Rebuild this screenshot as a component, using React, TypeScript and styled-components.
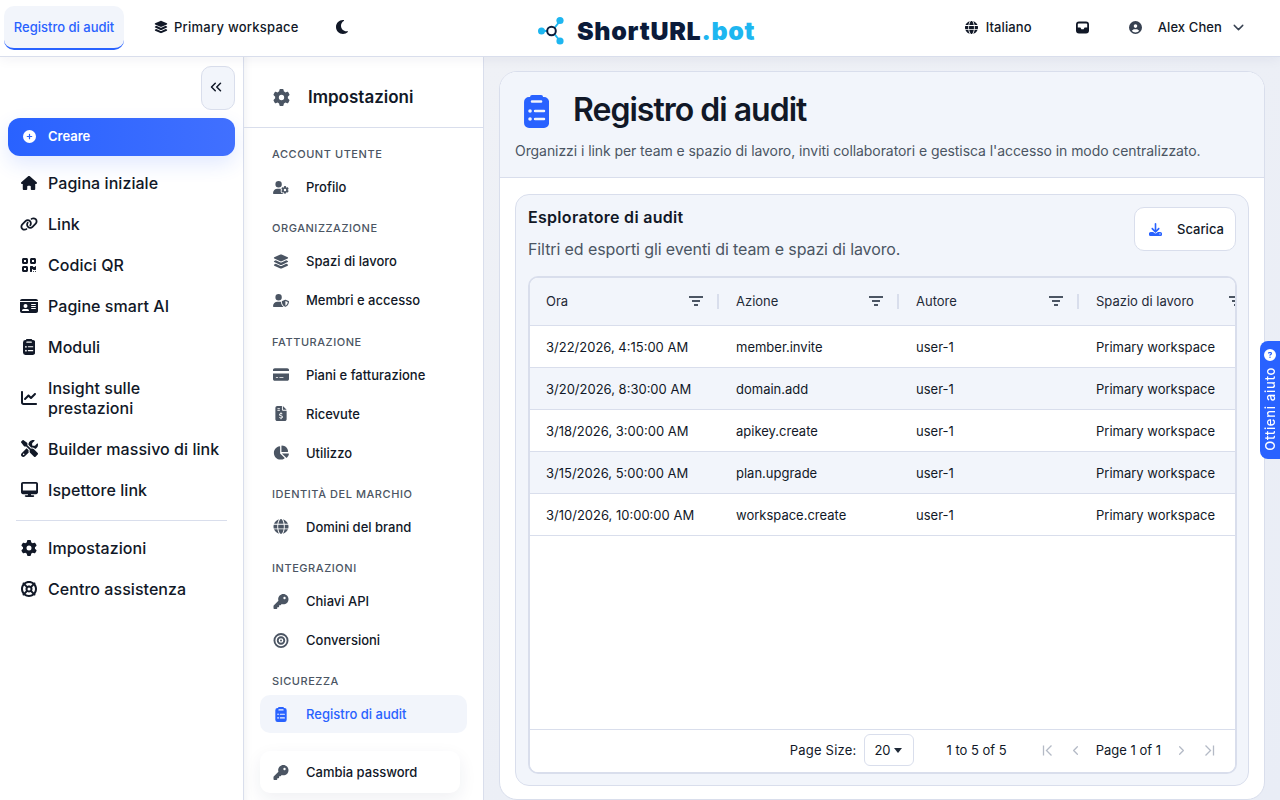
import React from 'react';
import styled, { createGlobalStyle } from 'styled-components';
import {
  FaBullseye,
  FaChartLine,
  FaChartPie,
  FaCirclePlus,
  FaCircleQuestion,
  FaCircleUser,
  FaCreditCard,
  FaDesktop,
  FaDownload,
  FaFileInvoiceDollar,
  FaGear,
  FaGlobe,
  FaHouse,
  FaIdCard,
  FaKey,
  FaLayerGroup,
  FaLifeRing,
  FaLink,
  FaMoon,
  FaQrcode,
  FaScrewdriverWrench,
  FaUserGear,
  FaUserShield,
} from 'react-icons/fa6';
import { FiChevronDown, FiChevronLeft, FiChevronRight, FiChevronsLeft } from 'react-icons/fi';

const GlobalStyle = createGlobalStyle`
  html, body {
    margin: 0;
    padding: 0;
    height: 100%;
    overflow: hidden;
    font-family: Inter, "Liberation Sans", sans-serif;
    color: #111827;
    background: #fff;
  }
  * { box-sizing: border-box; }
`;

const Page = styled.div`
  display: flex;
  flex-direction: column;
  height: 800px;
  overflow: hidden;
`;

const TopBar = styled.header`
  display: grid;
  grid-template-columns: 537px auto 1fr;
  align-items: center;
  flex: none;
  height: 57px;
  background: #fff;
  border-bottom: 1px solid #d9deec;
  position: relative;
  z-index: 3;
  box-shadow: 0 2px 12px rgba(30, 41, 80, 0.06);
`;

const TopLeft = styled.div`
  display: flex;
  align-items: center;
  padding-left: 4px;
`;

const ActiveTab = styled.div`
  display: flex;
  align-items: center;
  justify-content: center;
  width: 120px;
  height: 44px;
  margin-bottom: 1px;
  border-radius: 10px;
  border-bottom: 2px solid #2962ff;
  background: #f2f5fb;
  color: #2962ff;
  font-size: 13px;
  font-weight: 500;
`;

const WorkspaceButton = styled.div`
  display: flex;
  align-items: center;
  gap: 6px;
  margin-left: 30px;
  margin-bottom: 2px;
  font-size: 13px;
  font-weight: 500;
  letter-spacing: 0.25px;
  color: #111827;

  svg { font-size: 14px; }
`;

const ThemeIcon = styled.div`
  display: flex;
  margin-left: 35px;
  margin-bottom: 2px;
  font-size: 16px;
  color: #111827;
`;

const Logo = styled.div`
  display: flex;
  align-items: center;
  gap: 9px;
  margin-top: 5px;
`;

const LogoText = styled.span`
  font-size: 25px;
  font-weight: 900;
  letter-spacing: 0.7px;
  color: #0b1b3a;
`;

const LogoAccent = styled.span`
  color: #1eb6f0;
`;

const TopRight = styled.div`
  display: flex;
  align-items: center;
  justify-content: flex-end;
  margin-bottom: 2px;
  padding-right: 33px;
  font-size: 13px;
  font-weight: 500;
  letter-spacing: 0.1px;
  color: #111827;
`;

const LangIcon = styled(FaGlobe)`
  font-size: 13px;
  margin-right: 8px;
`;

const InboxIcon = styled.svg`
  width: 13px;
  height: 13px;
  margin-left: 44px;
`;

const UserIcon = styled(FaCircleUser)`
  font-size: 13px;
  margin-left: 40px;
  margin-right: 16px;
  color: #374151;
`;

const UserChevron = styled(FiChevronDown)`
  font-size: 17px;
  margin-left: 8px;
  color: #374151;
`;

const Body = styled.div`
  display: flex;
  flex: 1;
  min-height: 0;
`;

const Sidebar = styled.aside`
  flex: none;
  width: 244px;
  padding: 9px 8px 0;
  background: #fff;
  border-right: 1px solid #d9deec;
`;

const CollapseRow = styled.div`
  display: flex;
  justify-content: flex-end;
`;

const CollapseButton = styled.div`
  display: flex;
  align-items: center;
  justify-content: center;
  width: 34px;
  height: 44px;
  padding: 0 4px 2px 0;
  border: 1px solid #d9deec;
  border-radius: 10px;
  background: #f2f5fb;
  color: #111827;
  font-size: 18px;
`;

const CreateButton = styled.div`
  display: flex;
  align-items: center;
  gap: 12px;
  height: 38px;
  margin-top: 8px;
  margin-bottom: 6px;
  padding-left: 15px;
  padding-bottom: 2px;
  border-radius: 12px;
  background: linear-gradient(90deg, #2962ff, #4170ff);
  box-shadow: 0 8px 20px rgba(41, 98, 255, 0.14);
  color: #fff;
  font-size: 13px;
  font-weight: 600;

  svg { font-size: 13px; }
`;

const NavItem = styled.div`
  display: flex;
  align-items: center;
  gap: 10px;
  padding: 10.5px 8px 10.5px 12px;
  font-size: 16px;
  font-weight: 500;
  line-height: 20px;
  letter-spacing: 0.05px;
  color: #111827;
`;

const NavIcon = styled.span<{ $size?: number }>`
  display: flex;
  justify-content: center;
  flex: none;
  width: 18px;
  font-size: ${(p) => p.$size ?? 16}px;
`;

const NavDivider = styled.div`
  height: 1px;
  margin: 10px 8px 6px;
  background: #d9deec;
`;

const SettingsPanel = styled.aside`
  flex: none;
  width: 240px;
  overflow: hidden;
  background: #fff;
  border-right: 1px solid #d9deec;
  box-shadow: inset 10px 0 10px -10px rgba(30, 41, 80, 0.08);
`;

const SettingsHeader = styled.div`
  display: flex;
  align-items: center;
  gap: 18px;
  height: 71px;
  padding: 10px 0 0 29px;
  border-bottom: 1px solid #d9deec;
  font-size: 17px;
  font-weight: 600;
  color: #111827;

  svg { font-size: 17px; color: #4b5563; }
`;

const SettingsList = styled.div`
  padding: 19px 16px 0;
`;

const SectionLabel = styled.div`
  height: 14px;
  margin: 0 0 7px 12px;
  font-size: 11px;
  font-weight: 500;
  line-height: 14px;
  letter-spacing: 0.55px;
  color: #4b5563;
  text-transform: uppercase;
`;

const SettingsGroup = styled.div`
  margin-bottom: 15.25px;
`;

const SettingsItem = styled.div<{ $active?: boolean }>`
  display: flex;
  align-items: center;
  gap: 17px;
  height: 38px;
  margin-bottom: 1px;
  padding-left: 13px;
  border-radius: 10px;
  background: ${(p) => (p.$active ? '#f2f5fb' : 'transparent')};
  color: ${(p) => (p.$active ? '#2962ff' : '#111827')};
  font-size: 13px;
  font-weight: 500;

  svg {
    flex: none;
    width: 16px;
    font-size: 15px;
    color: ${(p) => (p.$active ? '#2962ff' : '#4b5563')};
  }
`;

const PasswordCard = styled(SettingsItem)`
  width: 200px;
  height: 42px;
  margin-top: 18px;
  background: #fff;
  box-shadow: 0 6px 18px rgba(30, 41, 80, 0.07);
`;

const Main = styled.main`
  flex: 1;
  min-width: 0;
  padding: 14px 15px 0;
  background: linear-gradient(135deg, #eff1f6, #e9edf6);
`;

const MainPanel = styled.div`
  height: 729px;
  overflow: hidden;
  border: 1px solid #d9deec;
  border-radius: 18px;
  background: #fff;
`;

const PanelHeader = styled.div`
  height: 106px;
  padding: 22px 15px 0;
  border-bottom: 1px solid #d9deec;
  background: #f2f5fb;
`;

const TitleRow = styled.div`
  display: flex;
  align-items: center;
  gap: 24px;
  padding-left: 9px;
  color: #2962ff;
  font-size: 33px;
`;

const Title = styled.h1`
  margin: 0;
  padding-bottom: 2px;
  font-size: 32px;
  font-weight: 600;
  line-height: 32px;
  letter-spacing: -1px;
  color: #111827;
`;

const Subtitle = styled.p`
  margin: 14px 0 0;
  font-size: 14px;
  line-height: 18px;
  letter-spacing: -0.07px;
  color: #4b5563;
`;

const PanelBody = styled.div`
  padding: 16px 15px 0;
`;

const AuditCard = styled.section`
  height: 592px;
  padding: 12px 12px 0 12px;
  border: 1px solid #d9deec;
  border-radius: 14px;
  background: #f2f5fb;
`;

const CardHeader = styled.div`
  display: flex;
  justify-content: space-between;
  height: 69px;
`;

const CardTitle = styled.h2`
  margin: 0;
  font-size: 16px;
  font-weight: 600;
  line-height: 20px;
  letter-spacing: 0.3px;
  color: #111827;
`;

const CardSubtitle = styled.p`
  margin: 12px 0 0;
  font-size: 16px;
  line-height: 20px;
  letter-spacing: -0.1px;
  color: #4b5563;
`;

const DownloadButton = styled.div`
  display: flex;
  align-items: center;
  gap: 15px;
  width: 102px;
  height: 44px;
  padding-left: 14px;
  border: 1px solid #d9deec;
  border-radius: 10px;
  background: #fff;
  color: #111827;
  font-size: 13px;
  font-weight: 500;

  svg { font-size: 13px; color: #2962ff; }
`;

const Grid = styled.div`
  display: flex;
  flex-direction: column;
  height: 498px;
  margin-right: -1px;
  overflow: hidden;
  border: 2px solid #d9deec;
  border-radius: 10px;
  background: #fff;
`;

const Row = styled.div<{ $alt?: boolean }>`
  display: grid;
  flex: none;
  grid-template-columns: 190px 180px 180px 180px;
  align-items: center;
  height: 42px;
  border-bottom: 1px solid #d9deec;
  background: ${(p) => (p.$alt ? '#f2f5fb' : '#fff')};
  font-size: 13px;
  color: #111827;
`;

const HeadRow = styled(Row)`
  height: 48px;
  background: #f2f5fb;
  font-weight: 400;
  color: #1f2937;
`;

const Cell = styled.div`
  padding-left: 16px;
  white-space: nowrap;
`;

const HeadCell = styled.div`
  position: relative;
  display: flex;
  align-items: center;
  justify-content: space-between;
  height: 100%;
  padding: 0 17px 2px 16px;
`;

const ColumnEdge = styled.span`
  position: absolute;
  right: 1px;
  top: 16px;
  width: 2px;
  height: 15px;
  background: #d9deec;
`;

const GridSpacer = styled.div`
  flex: 1;
`;

const Pager = styled.div`
  display: flex;
  flex: none;
  align-items: center;
  justify-content: flex-end;
  height: 43px;
  padding: 0 12px 2px 0;
  border-top: 1px solid #d9deec;
  background: #fff;
  font-size: 13px;
  color: #111827;
`;

const PageSizeLabel = styled.span`
  letter-spacing: 0.2px;
`;

const SizeSelect = styled.div`
  display: flex;
  align-items: center;
  gap: 3px;
  width: 50px;
  height: 32px;
  margin: 0 32px 0 8px;
  padding-left: 9px;
  border: 1px solid #d9deec;
  border-radius: 6px;
`;

const Caret = styled.span`
  width: 0;
  height: 0;
  border-left: 4.5px solid transparent;
  border-right: 4.5px solid transparent;
  border-top: 5px solid #1f2937;
`;

const PagerGap = styled.span`
  width: 27px;
`;

const PageLabel = styled.span`
  margin: 0 6px;
`;

const PagerIcon = styled.span`
  display: flex;
  align-items: center;
  justify-content: center;
  width: 16px;
  margin: 0 6px;
  font-size: 15px;
  color: #b4bac6;
`;

const HelpTab = styled.div`
  position: fixed;
  top: 341px;
  right: 0;
  display: flex;
  flex-direction: column;
  align-items: center;
  gap: 6px;
  width: 20px;
  height: 118px;
  padding-top: 8px;
  border-radius: 8px 0 0 8px;
  background: #2962ff;
  color: #fff;
  font-size: 13px;
  font-weight: 500;
  letter-spacing: 0.7px;

  svg { flex: none; font-size: 12px; }
`;

const HelpText = styled.span`
  writing-mode: vertical-rl;
  transform: rotate(180deg);
  white-space: nowrap;
`;

const FilterGlyph = () => (
  <svg width="14" height="12" viewBox="0 0 14 12" fill="#4b5563" aria-hidden="true">
    <rect x="0" y="1" width="14" height="2" />
    <rect x="3" y="5" width="8" height="2" />
    <rect x="5" y="9" width="4" height="2" />
  </svg>
);

const EdgeLeft = () => (
  <svg width="13" height="13" viewBox="0 0 13 13" fill="none" stroke="currentColor" strokeWidth="1.3">
    <path d="M2.5 1.5v10M10.5 1.5l-5 5 5 5" />
  </svg>
);

const EdgeRight = () => (
  <svg width="13" height="13" viewBox="0 0 13 13" fill="none" stroke="currentColor" strokeWidth="1.3">
    <path d="M10.5 1.5v10M2.5 1.5l5 5-5 5" />
  </svg>
);

const ClipboardGlyph = () => (
  <svg width="0.76em" height="1em" viewBox="0 0 25 33" aria-hidden="true">
    <path
      fill="currentColor"
      fillRule="evenodd"
      d="M8 0h9a2 2 0 0 1 2 2h1a5 5 0 0 1 5 5v21a5 5 0 0 1-5 5H5a5 5 0 0 1-5-5V7a5 5 0 0 1 5-5h1a2 2 0 0 1 2-2zM8 5.2a1.3 1.3 0 0 0 0 2.6h9a1.3 1.3 0 0 0 0-2.6zM6 14.2a1.8 1.8 0 1 0 0 3.6 1.8 1.8 0 0 0 0-3.6zM11 14.8a1.2 1.2 0 0 0 0 2.4h9a1.2 1.2 0 0 0 0-2.4zM6 22.2a1.8 1.8 0 1 0 0 3.6 1.8 1.8 0 0 0 0-3.6zM11 22.8a1.2 1.2 0 0 0 0 2.4h9a1.2 1.2 0 0 0 0-2.4z"
    />
  </svg>
);

const LogoMark = () => (
  <svg width="31" height="31" viewBox="0 0 31 31" fill="none" aria-hidden="true">
    <path d="M15 16L23 6M15 16L23 26" stroke="#1eb6f0" strokeWidth="2" />
    <path d="M4 16H12" stroke="#1eb6f0" strokeWidth="2" />
    <circle cx="14.5" cy="16" r="4.3" fill="#fff" stroke="#0b1b3a" strokeWidth="2" />
    <circle cx="4.5" cy="16" r="3.5" fill="#1eb6f0" />
    <circle cx="23" cy="5.5" r="3.6" fill="#1eb6f0" />
    <circle cx="23" cy="26" r="3.6" fill="#1eb6f0" />
  </svg>
);

const mainNav = [
  { label: 'Pagina iniziale', icon: <FaHouse /> },
  { label: 'Link', icon: <FaLink />, size: 18 },
  { label: 'Codici QR', icon: <FaQrcode /> },
  { label: 'Pagine smart AI', icon: <FaIdCard />, size: 18 },
  { label: 'Moduli', icon: <ClipboardGlyph /> },
  { label: 'Insight sulle prestazioni', icon: <FaChartLine /> },
  { label: 'Builder massivo di link', icon: <FaScrewdriverWrench />, size: 17 },
  { label: 'Ispettore link', icon: <FaDesktop />, size: 17 },
];

const settingsGroups = [
  { title: 'Account utente', items: [{ label: 'Profilo', icon: <FaUserGear /> }] },
  {
    title: 'Organizzazione',
    items: [
      { label: 'Spazi di lavoro', icon: <FaLayerGroup /> },
      { label: 'Membri e accesso', icon: <FaUserShield /> },
    ],
  },
  {
    title: 'Fatturazione',
    items: [
      { label: 'Piani e fatturazione', icon: <FaCreditCard /> },
      { label: 'Ricevute', icon: <FaFileInvoiceDollar /> },
      { label: 'Utilizzo', icon: <FaChartPie /> },
    ],
  },
  { title: 'Identità del marchio', items: [{ label: 'Domini del brand', icon: <FaGlobe /> }] },
  {
    title: 'Integrazioni',
    items: [
      { label: 'Chiavi API', icon: <FaKey /> },
      { label: 'Conversioni', icon: <FaBullseye /> },
    ],
  },
];

const events = [
  { time: '3/22/2026, 4:15:00 AM', action: 'member.invite' },
  { time: '3/20/2026, 8:30:00 AM', action: 'domain.add' },
  { time: '3/18/2026, 3:00:00 AM', action: 'apikey.create' },
  { time: '3/15/2026, 5:00:00 AM', action: 'plan.upgrade' },
  { time: '3/10/2026, 10:00:00 AM', action: 'workspace.create' },
];

const columns = ['Ora', 'Azione', 'Autore', 'Spazio di lavoro'];

export default function App() {
  return (
    <Page>
      <GlobalStyle />
      <TopBar>
        <TopLeft>
          <ActiveTab>Registro di audit</ActiveTab>
          <WorkspaceButton>
            <FaLayerGroup />
            Primary workspace
          </WorkspaceButton>
          <ThemeIcon>
            <FaMoon />
          </ThemeIcon>
        </TopLeft>
        <Logo>
          <LogoMark />
          <LogoText>
            ShortURL<LogoAccent>.bot</LogoAccent>
          </LogoText>
        </Logo>
        <TopRight>
          <LangIcon />
          Italiano
          <InboxIcon viewBox="0 0 13 13" aria-hidden="true">
            <path
              fill="#111827"
              fillRule="evenodd"
              d="M3 0.5h7a3 3 0 0 1 3 3v6a3 3 0 0 1-3 3H3a3 3 0 0 1-3-3v-6a3 3 0 0 1 3-3zM2.6 2.4a.8.8 0 0 0-.8.8v3.4h2.6l1 1.6h2.2l1-1.6h2.6V3.2a.8.8 0 0 0-.8-.8z"
            />
          </InboxIcon>
          <UserIcon />
          Alex Chen
          <UserChevron />
        </TopRight>
      </TopBar>

      <Body>
        <Sidebar>
          <CollapseRow>
            <CollapseButton>
              <FiChevronsLeft />
            </CollapseButton>
          </CollapseRow>
          <CreateButton>
            <FaCirclePlus />
            Creare
          </CreateButton>
          {mainNav.map((item) => (
            <NavItem key={item.label}>
              <NavIcon $size={item.size}>{item.icon}</NavIcon>
              {item.label}
            </NavItem>
          ))}
          <NavDivider />
          <NavItem>
            <NavIcon>
              <FaGear />
            </NavIcon>
            Impostazioni
          </NavItem>
          <NavItem>
            <NavIcon>
              <FaLifeRing />
            </NavIcon>
            Centro assistenza
          </NavItem>
        </Sidebar>

        <SettingsPanel>
          <SettingsHeader>
            <FaGear />
            Impostazioni
          </SettingsHeader>
          <SettingsList>
            {settingsGroups.map((group) => (
              <SettingsGroup key={group.title}>
                <SectionLabel>{group.title}</SectionLabel>
                {group.items.map((item) => (
                  <SettingsItem key={item.label}>
                    {item.icon}
                    {item.label}
                  </SettingsItem>
                ))}
              </SettingsGroup>
            ))}
            <SectionLabel>Sicurezza</SectionLabel>
            <SettingsItem $active>
              <ClipboardGlyph />
              Registro di audit
            </SettingsItem>
            <PasswordCard>
              <FaKey />
              Cambia password
            </PasswordCard>
          </SettingsList>
        </SettingsPanel>

        <Main>
          <MainPanel>
            <PanelHeader>
              <TitleRow>
                <ClipboardGlyph />
                <Title>Registro di audit</Title>
              </TitleRow>
              <Subtitle>
                Organizzi i link per team e spazio di lavoro, inviti collaboratori e gestisca l'accesso in modo
                centralizzato.
              </Subtitle>
            </PanelHeader>
            <PanelBody>
              <AuditCard>
                <CardHeader>
                  <div>
                    <CardTitle>Esploratore di audit</CardTitle>
                    <CardSubtitle>Filtri ed esporti gli eventi di team e spazi di lavoro.</CardSubtitle>
                  </div>
                  <DownloadButton>
                    <FaDownload />
                    Scarica
                  </DownloadButton>
                </CardHeader>
                <Grid>
                  <HeadRow>
                    {columns.map((col, i) => (
                      <HeadCell key={col}>
                        {col}
                        <FilterGlyph />
                        {i < columns.length - 1 && <ColumnEdge />}
                      </HeadCell>
                    ))}
                  </HeadRow>
                  {events.map((ev, i) => (
                    <Row key={ev.action} $alt={i % 2 === 1}>
                      <Cell>{ev.time}</Cell>
                      <Cell>{ev.action}</Cell>
                      <Cell>user-1</Cell>
                      <Cell>Primary workspace</Cell>
                    </Row>
                  ))}
                  <GridSpacer />
                  <Pager>
                    <PageSizeLabel>Page Size:</PageSizeLabel>
                    <SizeSelect>
                      20
                      <Caret />
                    </SizeSelect>
                    1 to 5 of 5
                    <PagerGap />
                    <PagerIcon>
                      <EdgeLeft />
                    </PagerIcon>
                    <PagerIcon>
                      <FiChevronLeft />
                    </PagerIcon>
                    <PageLabel>Page 1 of 1</PageLabel>
                    <PagerIcon>
                      <FiChevronRight />
                    </PagerIcon>
                    <PagerIcon>
                      <EdgeRight />
                    </PagerIcon>
                  </Pager>
                </Grid>
              </AuditCard>
            </PanelBody>
          </MainPanel>
        </Main>
      </Body>

      <HelpTab>
        <FaCircleQuestion />
        <HelpText>Ottieni aiuto</HelpText>
      </HelpTab>
    </Page>
  );
}
